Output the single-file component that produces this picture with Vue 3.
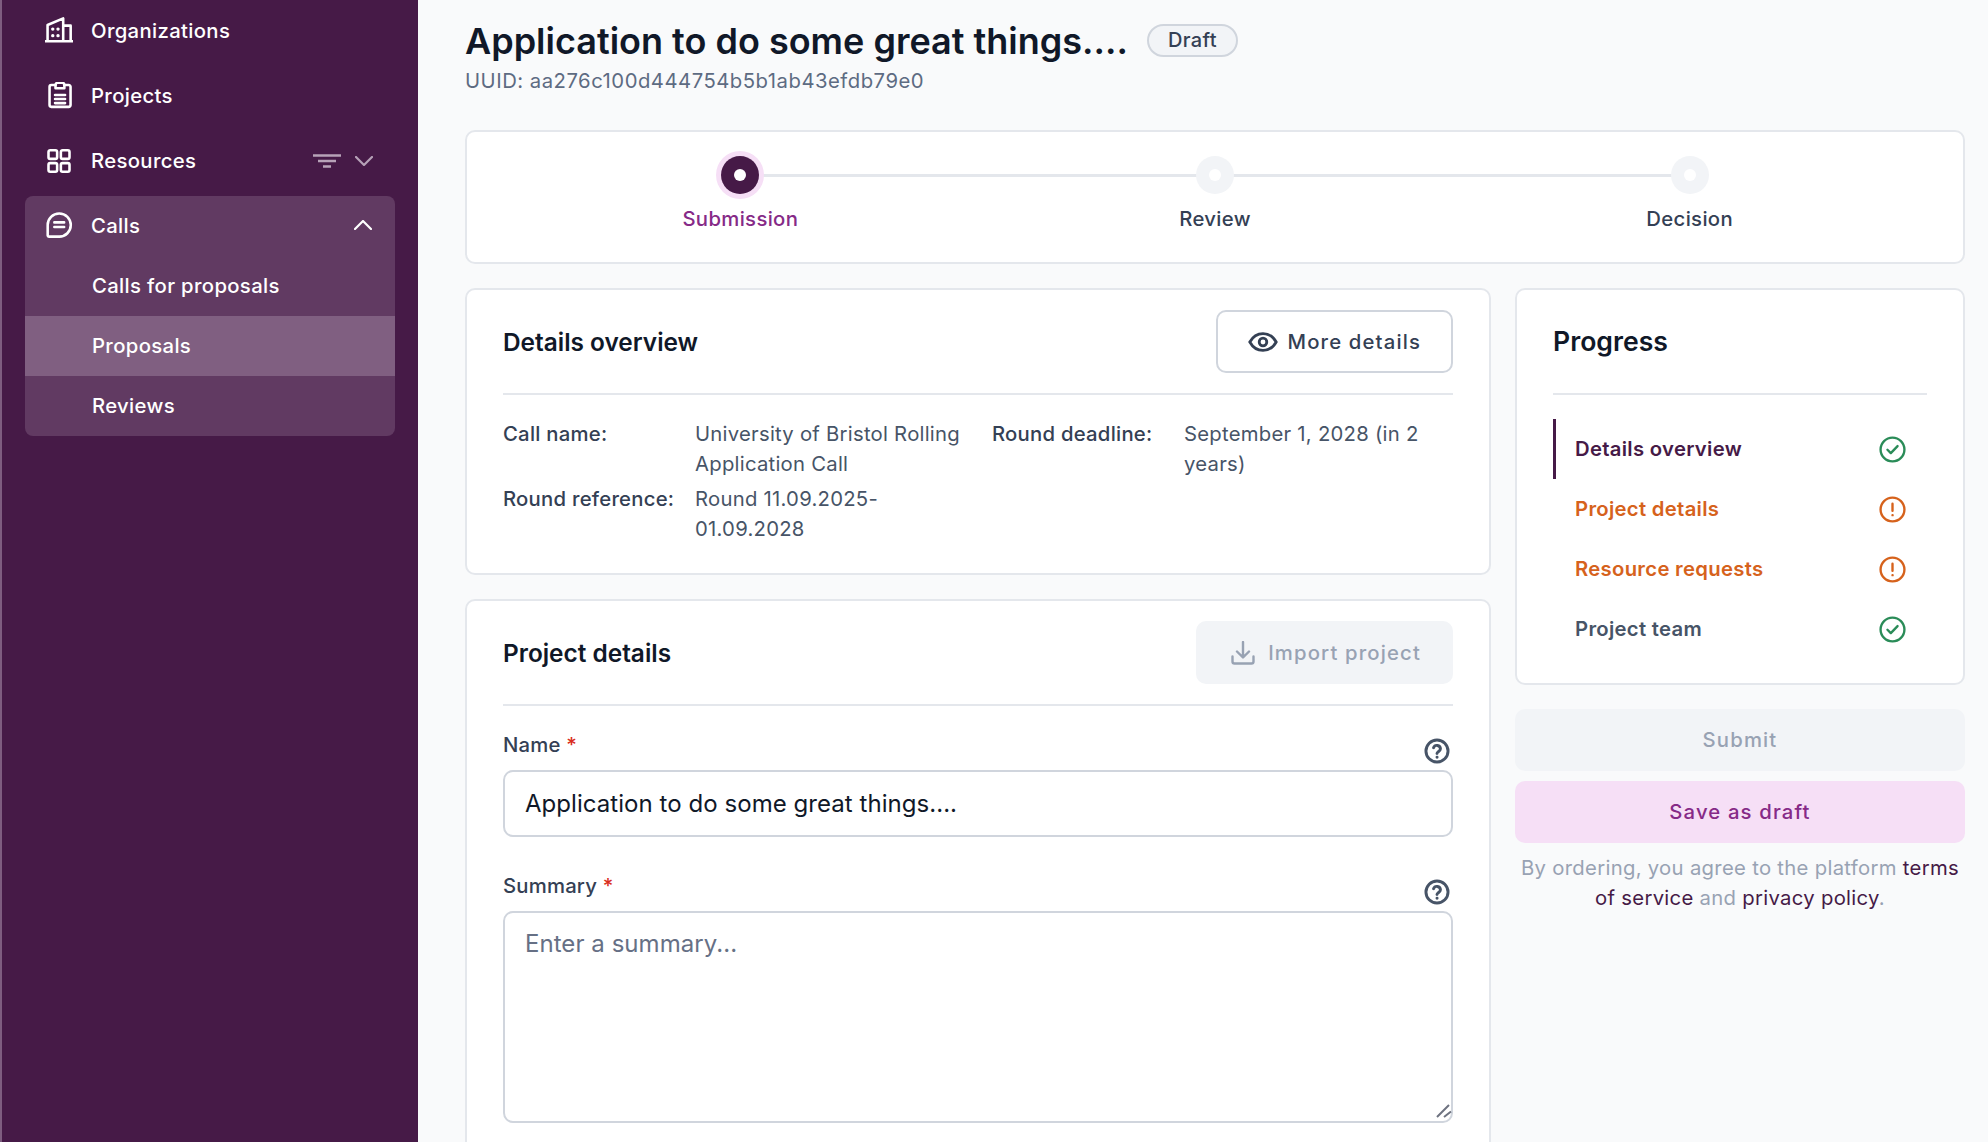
<script setup>
const navItems = [
  { label: 'Organizations', icon: 'building' },
  { label: 'Projects', icon: 'clipboard' },
  { label: 'Resources', icon: 'grid', filter: true },
]
const subItems = [
  { label: 'Calls for proposals' },
  { label: 'Proposals', active: true },
  { label: 'Reviews' },
]
const steps = [
  { label: 'Submission', active: true },
  { label: 'Review' },
  { label: 'Decision' },
]
const overview = [
  { label: 'Call name:', value: 'University of Bristol Rolling Application Call' },
  { label: 'Round deadline:', value: 'September 1, 2028 (in 2 years)' },
  { label: 'Round reference:', value: 'Round 11.09.2025-01.09.2028' },
]
const progress = [
  { label: 'Details overview', state: 'ok', current: true },
  { label: 'Project details', state: 'warn' },
  { label: 'Resource requests', state: 'warn' },
  { label: 'Project team', state: 'ok' },
]
</script>

<template>
  <div class="page">
    <aside class="sidebar">
      <div v-for="item in navItems" :key="item.label" class="nav-item">
        <svg class="nav-icon" viewBox="0 0 24 24">
          <template v-if="item.icon === 'building'">
            <path d="M0.5 20.8H23.5M2.2 20.8V6.9L15.6 1.2V20.8M15.6 7.4H22V20.8" />
            <path class="dots" d="M6.6 10.3h.1M11.1 10.3h.1M6.6 16h.1M11.1 16h.1" />
          </template>
          <template v-else-if="item.icon === 'clipboard'">
            <path d="M9 2.6H5.4A1.5 1.5 0 0 0 3.9 4.1v15.7a1.5 1.5 0 0 0 1.5 1.5h15a1.5 1.5 0 0 0 1.5-1.5V4.1a1.5 1.5 0 0 0-1.5-1.5H16.6" />
            <path d="M9 5.4V2.6a1.9 1.9 0 0 1 1.9-1.9h3.8a1.9 1.9 0 0 1 1.9 1.9v2.8z" />
            <path d="M8.6 11.1h8.6M8.6 14.6h8.6M8.6 18.1h8.6" />
          </template>
          <template v-else>
            <rect x="3" y="2.8" width="7.4" height="7.4" rx="1.4" />
            <rect x="13.6" y="2.8" width="7.4" height="7.4" rx="1.4" />
            <rect x="3" y="13.8" width="7.4" height="7.4" rx="1.4" />
            <rect x="13.6" y="13.8" width="7.4" height="7.4" rx="1.4" />
          </template>
        </svg>
        <span class="nav-label">{{ item.label }}</span>
        <template v-if="item.filter">
          <svg class="filter-icon" viewBox="0 0 28 14">
            <path d="M0 1.5H28M5 7H23M10 12.5H18" />
          </svg>
          <svg class="chevron muted" viewBox="0 0 18 10">
            <path d="M1 1l8 8 8-8" />
          </svg>
        </template>
      </div>

      <div class="nav-group">
        <div class="nav-item open">
          <svg class="nav-icon" viewBox="0 0 24 24">
            <path d="M2.3 20.1V11.2A9.9 9.9 0 1 1 12.2 21.1H3.3a1 1 0 0 1-1-1z" />
            <path d="M8 8.9h8.4M8 12.9h8.4" />
          </svg>
          <span class="nav-label">Calls</span>
          <svg class="chevron up" viewBox="0 0 18 10">
            <path d="M1 9l8-8 8 8" />
          </svg>
        </div>
        <div
          v-for="sub in subItems"
          :key="sub.label"
          class="sub-item"
          :class="{ active: sub.active }"
        >
          {{ sub.label }}
        </div>
      </div>
    </aside>

    <main class="main">
      <div class="title-row">
        <h1>Application to do some great things....</h1>
        <span class="badge">Draft</span>
      </div>
      <div class="uuid">UUID: aa276c100d444754b5b1ab43efdb79e0</div>

      <section class="card stepper">
        <div
          v-for="(step, i) in steps"
          :key="step.label"
          class="step"
          :class="{ active: step.active }"
        >
          <div v-if="i < steps.length - 1" class="step-line"></div>
          <div class="step-dot"><i></i></div>
          <div class="step-label">{{ step.label }}</div>
        </div>
      </section>

      <div class="columns">
        <div class="left">
          <section class="card panel">
            <header class="panel-head">
              <h2>Details overview</h2>
              <button class="btn outline">
                <svg class="eye" viewBox="0 0 30 20">
                  <path d="M1.8 10C5 4.2 9.5 1.6 15 1.6S25 4.2 28.2 10C25 15.8 20.5 18.4 15 18.4S5 15.8 1.8 10z" />
                  <circle cx="15" cy="10" r="3.8" />
                </svg>
                More details
              </button>
            </header>
            <div class="overview">
              <div v-for="row in overview" :key="row.label" class="overview-row">
                <span class="overview-label">{{ row.label }}</span>
                <span class="overview-value">{{ row.value }}</span>
              </div>
            </div>
          </section>

          <section class="card panel form-panel">
            <header class="panel-head">
              <h2>Project details</h2>
              <button class="btn disabled import-btn">
                <svg class="import" viewBox="0 0 24 24">
                  <path d="M12 1v15M6 10.5l6 6 6-6M1.5 15.5v5a2 2 0 0 0 2 2h17a2 2 0 0 0 2-2v-5" />
                </svg>
                Import project
              </button>
            </header>

            <div class="field">
              <div class="field-head">
                <label>Name <em>*</em></label>
                <svg class="help" viewBox="0 0 24 24">
                  <circle cx="12" cy="12" r="10.2" />
                  <path d="M8.8 9a3.3 3.3 0 0 1 6.4 1c0 2.2-3.2 2.6-3.2 4.4M12 17.8h.1" />
                </svg>
              </div>
              <input class="control" type="text" value="Application to do some great things...." />
            </div>

            <div class="field">
              <div class="field-head">
                <label>Summary <em>*</em></label>
                <svg class="help" viewBox="0 0 24 24">
                  <circle cx="12" cy="12" r="10.2" />
                  <path d="M8.8 9a3.3 3.3 0 0 1 6.4 1c0 2.2-3.2 2.6-3.2 4.4M12 17.8h.1" />
                </svg>
              </div>
              <div class="area-wrap">
                <textarea class="control area" placeholder="Enter a summary..."></textarea>
                <svg class="grip" viewBox="0 0 16 14">
                  <path d="M1 13L13 1M8 13l7-5.5" />
                </svg>
              </div>
            </div>
          </section>
        </div>

        <div class="right">
          <section class="card progress">
            <h3>Progress</h3>
            <ul>
              <li
                v-for="item in progress"
                :key="item.label"
                :class="[item.state, { current: item.current }]"
              >
                <span>{{ item.label }}</span>
                <svg class="state-icon" viewBox="0 0 24 24">
                  <circle cx="12" cy="12" r="10.6" />
                  <path v-if="item.state === 'ok'" d="M7.5 12.2l3 3 6-6.2" />
                  <path v-else d="M12 6.8v6.4M12 17h.1" />
                </svg>
              </li>
            </ul>
          </section>

          <button class="btn wide disabled">Submit</button>
          <button class="btn wide draft">Save as draft</button>
          <p class="terms">
            By ordering, you agree to the platform <a>terms of service</a> and
            <a>privacy policy</a>.
          </p>
        </div>
      </div>
    </main>
  </div>
</template>

<style>
html,
body {
  margin: 0;
  overflow: hidden;
}
</style>

<style scoped>
.page {
  display: flex;
  height: 1142px;
  overflow: hidden;
  background: #f9fafb;
  font-family: Inter, "Noto Sans", sans-serif;
  color: #344054;
}

.sidebar {
  box-sizing: border-box;
  flex: 0 0 418px;
  display: flex;
  flex-direction: column;
  gap: 5px;
  padding: 1px 23px 0 23px;
  background: #461a47;
  border-left: 2px solid #7e5d80;
  color: #fff;
}
.nav-item {
  display: flex;
  align-items: center;
  height: 60px;
  padding: 0 20px;
  font-size: 20.3px;
  font-weight: 500;
  letter-spacing: 0.35px;
}
.nav-icon {
  width: 28px;
  height: 28px;
  flex: none;
  fill: none;
  stroke: #fff;
  stroke-width: 2.2;
  stroke-linecap: round;
  stroke-linejoin: round;
}
.nav-icon .dots {
  stroke-width: 2.8;
}
.nav-label {
  flex: 1;
  margin-left: 18px;
  padding-bottom: 2px;
}
.filter-icon {
  width: 28px;
  height: 14px;
  fill: none;
  stroke: #b7a2b8;
  stroke-width: 2.4;
  margin-right: 14px;
}
.chevron {
  width: 18px;
  height: 10px;
  fill: none;
  stroke: #fff;
  stroke-width: 2.2;
  stroke-linecap: round;
  stroke-linejoin: round;
  margin-right: 2px;
}
.chevron.muted {
  stroke: #b7a2b8;
}
.chevron.up {
  margin-right: 3px;
  margin-bottom: 2px;
}
.nav-group {
  background: #613a62;
  border-radius: 8px;
  overflow: hidden;
}
.sub-item {
  display: flex;
  align-items: center;
  box-sizing: border-box;
  height: 60px;
  padding: 0 0 2px 67px;
  font-size: 20.3px;
  font-weight: 500;
  letter-spacing: 0.35px;
}
.sub-item.active {
  background: #805f81;
}

.main {
  flex: 1;
  min-width: 0;
  padding: 0 23px 0 47px;
}
.title-row {
  display: flex;
  align-items: center;
  height: 81px;
  margin-bottom: -15px;
}
h1 {
  margin: 0;
  font-size: 36px;
  font-weight: 600;
  color: #101828;
}
.badge {
  margin-left: 19px;
  padding: 0 19px;
  height: 33px;
  line-height: 29px;
  box-sizing: border-box;
  border: 2px solid #d0d5dd;
  border-radius: 17px;
  background: #f2f4f7;
  font-size: 20px;
  font-weight: 500;
  letter-spacing: 0.4px;
}
.uuid {
  font-size: 20.3px;
  line-height: 30px;
  letter-spacing: 0.5px;
  color: #5d6b82;
}

.card {
  box-sizing: border-box;
  background: #fff;
  border: 2px solid #e4e7ec;
  border-radius: 10px;
}
.stepper {
  display: flex;
  height: 134px;
  margin-top: 34px;
  padding: 19px 36px 0;
}
.step {
  position: relative;
  flex: 1;
  display: flex;
  flex-direction: column;
  align-items: center;
}
.step-line {
  position: absolute;
  left: 50%;
  width: 100%;
  top: 23px;
  height: 3px;
  background: #e4e7ec;
}
.step-dot {
  position: relative;
  box-sizing: border-box;
  display: flex;
  align-items: center;
  justify-content: center;
  width: 38px;
  height: 38px;
  margin: 5px;
  border-radius: 50%;
  background: #f2f4f7;
}
.step-dot i {
  width: 12px;
  height: 12px;
  border-radius: 50%;
  background: #fff;
}
.step.active .step-dot {
  background: #461a47;
  box-shadow: 0 0 0 5px #f6dff6;
}
.step-label {
  margin-top: 5px;
  font-size: 20.3px;
  line-height: 30px;
  font-weight: 500;
  letter-spacing: 0.35px;
  color: #344054;
}
.step.active .step-label {
  color: #862a87;
}

.columns {
  display: flex;
  gap: 24px;
  margin-top: 24px;
}
.left {
  flex: 0 0 1026px;
  display: flex;
  flex-direction: column;
  gap: 24px;
}
.right {
  flex: 0 0 450px;
}
.panel {
  padding: 20px 36px 29px;
}
.panel-head {
  display: flex;
  align-items: center;
  justify-content: space-between;
  padding-bottom: 20px;
  border-bottom: 2px solid #e4e7ec;
}
h2 {
  margin: 0;
  font-size: 24.4px;
  font-weight: 600;
  color: #101828;
}
.btn {
  display: flex;
  align-items: center;
  justify-content: center;
  gap: 10px;
  box-sizing: border-box;
  height: 63px;
  padding: 0 30px;
  border: 0;
  border-radius: 10px;
  font-family: inherit;
  font-size: 20.3px;
  font-weight: 500;
  letter-spacing: 1.15px;
}
.btn.outline {
  background: #fff;
  border: 2px solid #d0d5dd;
  color: #344054;
}
.btn.disabled {
  background: #f2f4f7;
  color: #98a2b3;
}
.import-btn {
  gap: 13px;
  padding-left: 35px;
  padding-right: 32px;
}
.eye {
  width: 30px;
  height: 20px;
  fill: none;
  stroke: #344054;
  stroke-width: 2.8;
}
.import {
  width: 24px;
  height: 24px;
  fill: none;
  stroke: #98a2b3;
  stroke-width: 2.4;
  stroke-linecap: round;
  stroke-linejoin: round;
}
.overview {
  display: grid;
  grid-template-columns: 1fr 1fr;
  column-gap: 28px;
  row-gap: 5px;
  padding-top: 24px;
}
.overview-row {
  display: grid;
  grid-template-columns: 192px 1fr;
  font-size: 20.3px;
  line-height: 30px;
  letter-spacing: 0.25px;
}
.overview-label {
  font-weight: 500;
  color: #344054;
}
.overview-value {
  color: #475467;
}

.form-panel {
  padding-bottom: 200px;
}
.field {
  margin-top: 24px;
}
.field + .field {
  margin-top: 34px;
}
.field-head {
  display: flex;
  align-items: flex-start;
  justify-content: space-between;
  height: 40px;
  padding-right: 3px;
}
label {
  font-size: 20.3px;
  line-height: 30px;
  font-weight: 500;
  letter-spacing: 0.2px;
  color: #344054;
}
label em {
  font-style: normal;
  color: #d92d20;
}
.help {
  width: 26px;
  height: 26px;
  margin-top: 8px;
  fill: none;
  stroke: #475467;
  stroke-width: 2.7;
  stroke-linecap: round;
}
.control {
  display: block;
  box-sizing: border-box;
  width: 100%;
  height: 67px;
  padding: 0 20px;
  background: #fff;
  border: 2px solid #d0d5dd;
  border-radius: 10px;
  outline: none;
  font-family: inherit;
  font-size: 24px;
  letter-spacing: 0.05px;
  color: #101828;
}
.area-wrap {
  position: relative;
}
.control.area {
  height: 212px;
  padding-top: 15px;
  line-height: 32px;
  resize: none;
}
.control::placeholder {
  color: #667085;
  opacity: 1;
}
.grip {
  position: absolute;
  right: 1px;
  bottom: 5px;
  width: 16px;
  height: 14px;
  fill: none;
  stroke: #6e7380;
  stroke-width: 2;
}

.progress {
  height: 397px;
  padding: 0 36px;
}
h3 {
  box-sizing: border-box;
  margin: 0;
  height: 105px;
  line-height: 103px;
  font-size: 26.6px;
  font-weight: 600;
  color: #101828;
  border-bottom: 2px solid #e4e7ec;
}
.progress ul {
  list-style: none;
  margin: 24px 0 0;
  padding: 0;
}
.progress li {
  display: flex;
  align-items: center;
  justify-content: space-between;
  height: 60px;
  padding: 0 21px 0 22px;
  font-size: 20.3px;
  font-weight: 600;
  letter-spacing: 0.3px;
  color: #475467;
}
.progress li span {
  padding-bottom: 2px;
}
.progress li.warn {
  color: #d6621c;
}
.progress li.current {
  color: #461a47;
  box-shadow: inset 3px 0 0 #461a47;
}
.state-icon {
  width: 27px;
  height: 27px;
  fill: none;
  stroke-width: 2.1;
  stroke-linecap: round;
  stroke-linejoin: round;
}
.ok .state-icon {
  stroke: #2a8c58;
}
.warn .state-icon {
  stroke: #d6621c;
}
.btn.wide {
  width: 100%;
  height: 62px;
  padding-bottom: 1px;
}
.right .btn.disabled {
  margin-top: 24px;
}
.btn.draft {
  margin-top: 10px;
  background: #f6dff6;
  color: #862a87;
}
.terms {
  margin: 10px 0 0;
  text-align: center;
  font-size: 20.3px;
  line-height: 30px;
  letter-spacing: 0.3px;
  color: #98a2b3;
}
.terms a {
  color: #461a47;
}
</style>
